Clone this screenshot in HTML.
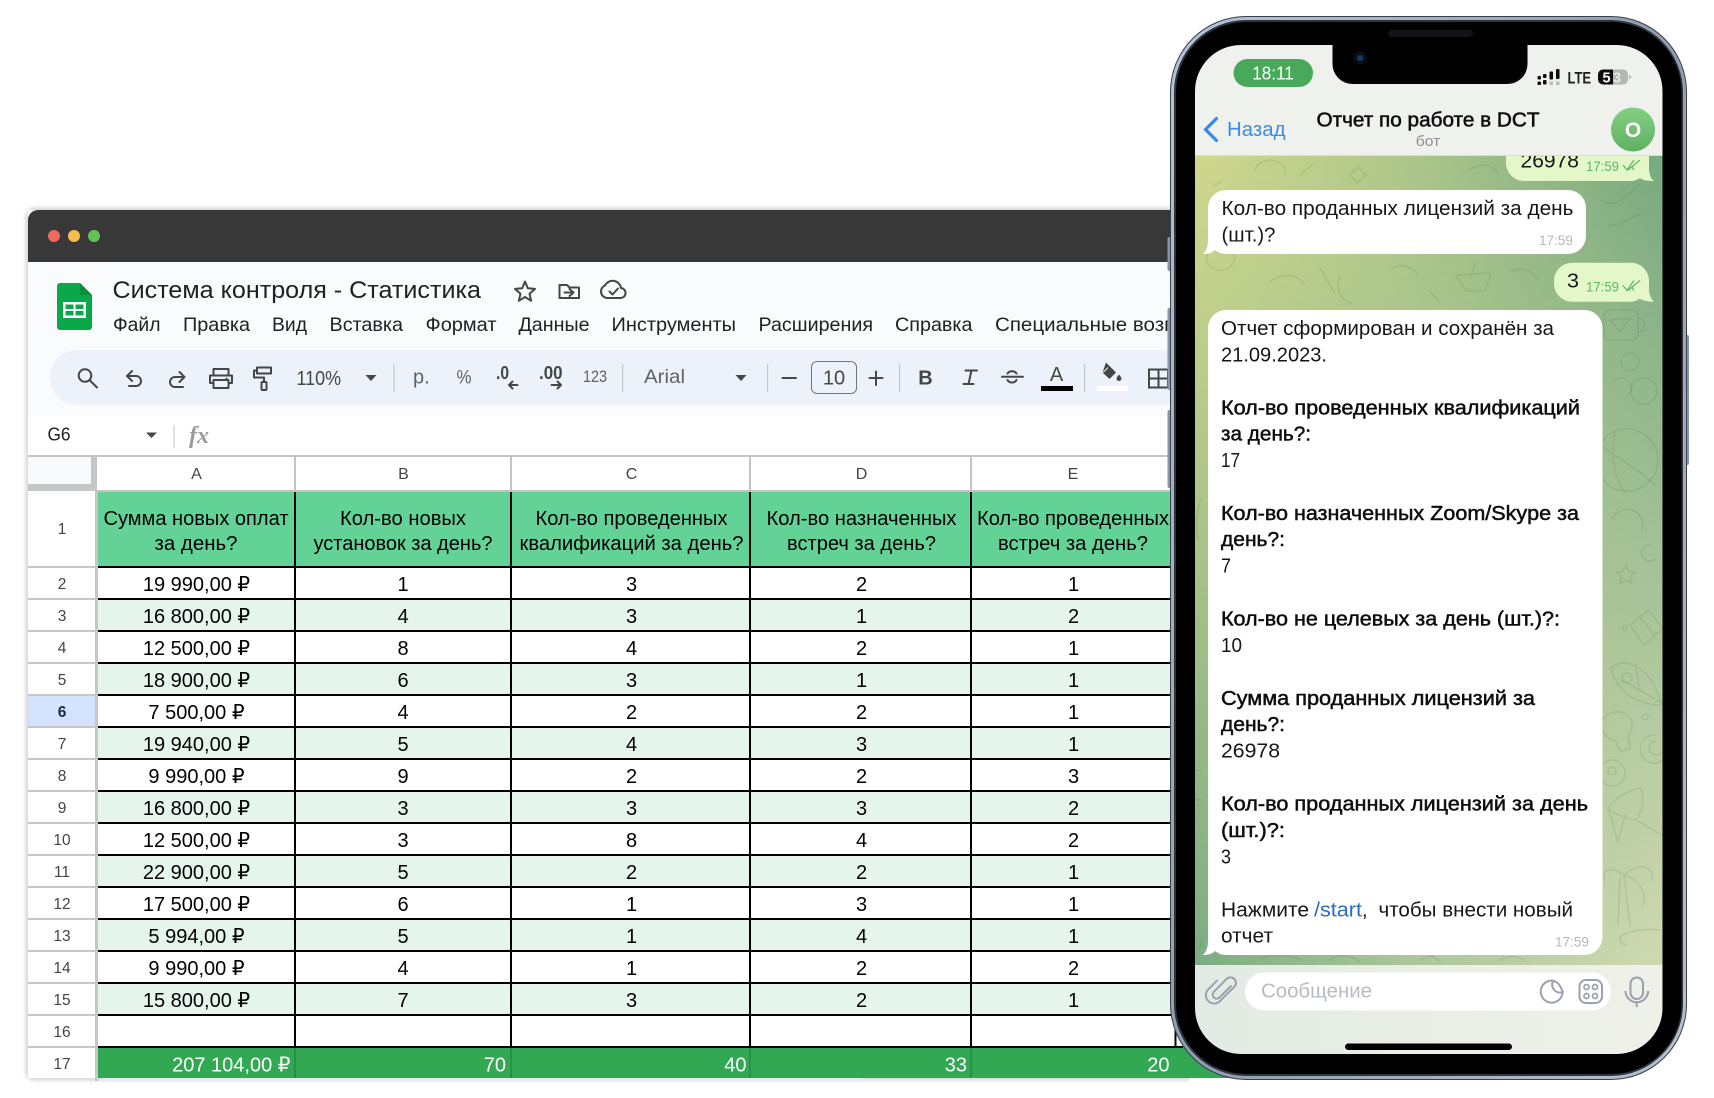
<!DOCTYPE html>
<html lang="ru"><head><meta charset="utf-8"><title>Система контроля</title>
<style>
html,body{margin:0;padding:0;background:#fff;width:1714px;height:1098px;overflow:hidden}
svg{display:block;position:absolute;left:0;top:0}
text{font-family:"Liberation Sans","DejaVu Sans",sans-serif;white-space:pre}
.m{font-size:19.5px;fill:#202124}
.h{font-size:20px;fill:#000;text-anchor:middle}
.d{font-size:20px;fill:#000;text-anchor:middle}
.r{font-size:15.5px;fill:#444;text-anchor:middle}
.c{font-size:16px;fill:#444;text-anchor:middle}
.w{font-size:20px;fill:#fff;text-anchor:end}
.p{font-size:20px;fill:#161616}
.b{font-size:20px;fill:#111;stroke:#111;stroke-width:.5px}
.ico{fill:none;stroke:#444746;stroke-width:2;stroke-linecap:round;stroke-linejoin:round}
.pi{fill:none;stroke:#9aa0ad;stroke-width:2}
.dd{fill:none;stroke:#3f6f45;stroke-opacity:.13;stroke-width:1.6;stroke-linejoin:round;stroke-linecap:round}
</style></head><body>
<svg width="1714" height="1098" viewBox="0 0 1714 1098" xmlns="http://www.w3.org/2000/svg">
<defs>
<filter id="s1" x="-5%" y="-5%" width="110%" height="110%"><feGaussianBlur stdDeviation="1.6"/></filter>
<filter id="soft" x="-2%" y="-2%" width="104%" height="104%"><feGaussianBlur stdDeviation="0.35"/></filter>
<clipPath id="screen"><rect x="1195" y="45" width="467.5" height="1009" rx="46"/></clipPath>
<clipPath id="sheetclip"><rect x="0" y="200" width="1190" height="890"/></clipPath>
<linearGradient id="gtop" x1="0" x2="1" y1="0" y2="0"><stop offset="0" stop-color="#d1d88e"/><stop offset=".45" stop-color="#aec78a"/><stop offset="1" stop-color="#79a97f"/></linearGradient>
<linearGradient id="gbot" x1="0" x2="1" y1="0" y2="0"><stop offset="0" stop-color="#7cac82"/><stop offset=".45" stop-color="#a9c698"/><stop offset="1" stop-color="#d0d9b0"/></linearGradient>
<linearGradient id="mv" x1="0" x2="0" y1="0" y2="1"><stop offset="0" stop-color="#000"/><stop offset="1" stop-color="#fff"/></linearGradient>
<mask id="mk" maskUnits="userSpaceOnUse" x="1195" y="155" width="468" height="811"><rect x="1195" y="155" width="468" height="811" fill="url(#mv)"/></mask>
<linearGradient id="gbar" x1="0" x2="1" y1="0" y2="0"><stop offset="0" stop-color="#e2ebe3"/><stop offset="1" stop-color="#eff1e9"/></linearGradient>
<linearGradient id="gava" x1="0" x2="0" y1="0" y2="1"><stop offset="0" stop-color="#85cf85"/><stop offset="1" stop-color="#5fb161"/></linearGradient>
<linearGradient id="ring" x1="0" x2="1" y1="0" y2="1"><stop offset="0" stop-color="#b4c4da"/><stop offset=".5" stop-color="#8f9db2"/><stop offset="1" stop-color="#b6c0ce"/></linearGradient>
</defs>

<!-- ===== SHEETS WINDOW ===== -->
<g clip-path="url(#sheetclip)">
<rect x="25" y="207" width="1170" height="874" rx="10" fill="#dcdcdc" filter="url(#s1)"/>
<rect x="28" y="210" width="1170" height="868" fill="#fff"/>
<path d="M28 262V220a10 10 0 0 1 10-10H1198V262Z" fill="#383838"/>
<circle cx="54" cy="236" r="6" fill="#ee6a5f"/><circle cx="74" cy="236" r="6" fill="#f5bd4f"/><circle cx="94" cy="236" r="6" fill="#61c354"/>
<rect x="28" y="262" width="1170" height="154" fill="#f9fbfd"/>
<!-- sheets logo -->
<path d="M60 283H80L92 295V327a3 3 0 0 1-3 3H60a3 3 0 0 1-3-3V286a3 3 0 0 1 3-3Z" fill="#0ba84a"/>
<path d="M80 283L92 295H80Z" fill="#0a8c3e"/>
<path d="M63 302H86V318H63Z" fill="#fff"/>
<path d="M65.5 304.5H73.5V309H65.5ZM75.500 304.5H83.500V309H75.500ZM65.5 311H73.5V315.500H65.5ZM75.500 311H83.500V315.500H75.500Z" fill="#0ba84a"/>
<text x="112.500" y="298" font-size="24.500" fill="#202124" textLength="368.500" lengthAdjust="spacingAndGlyphs">Система контроля - Статистика</text>
<!-- star folder cloud -->
<path d="M525 281.500L527.800 288.300L535 288.900L529.500 293.700L531.200 300.800L525 297L518.800 300.800L520.500 293.700L515 288.900L522.200 288.300Z" class="ico"/>
<path d="M559.500 285H567L569.500 287.500H579V298H559.500Z" class="ico" stroke-width="2.200"/>
<path d="M564.500 292.500H573M569.500 289L573.500 292.500L569.500 296" class="ico" stroke-width="1.800"/>
<path d="M607.500 298H620a5 5 0 0 0 1-10a8.500 8.500 0 0 0-16-2.500a6.500 6.500 0 0 0 2.500 12.500Z" class="ico"/>
<path d="M609.500 291.500L612.500 294.500L618 288.500" class="ico"/>
<!-- menu -->
<g>
<text class="m" x="113" y="331" textLength="47.500" lengthAdjust="spacingAndGlyphs">Файл</text>
<text class="m" x="183" y="331" textLength="67" lengthAdjust="spacingAndGlyphs">Правка</text>
<text class="m" x="272" y="331" textLength="35" lengthAdjust="spacingAndGlyphs">Вид</text>
<text class="m" x="329.500" y="331" textLength="73.500" lengthAdjust="spacingAndGlyphs">Вставка</text>
<text class="m" x="425.500" y="331" textLength="71" lengthAdjust="spacingAndGlyphs">Формат</text>
<text class="m" x="518.500" y="331" textLength="71" lengthAdjust="spacingAndGlyphs">Данные</text>
<text class="m" x="611.500" y="331" textLength="124.500" lengthAdjust="spacingAndGlyphs">Инструменты</text>
<text class="m" x="758.500" y="331" textLength="114.500" lengthAdjust="spacingAndGlyphs">Расширения</text>
<text class="m" x="895" y="331" textLength="77.500" lengthAdjust="spacingAndGlyphs">Справка</text>
<text class="m" x="995" y="331" textLength="262" lengthAdjust="spacingAndGlyphs">Специальные возможности</text>
</g>
<!-- toolbar -->
<path d="M77 350H1198V405H77a27.500 27.500 0 0 1 0-55Z" fill="#edf2fa"/>
<circle cx="85" cy="375.500" r="6.300" class="ico"/><path d="M89.500 380L97 387.500" class="ico"/>
<path d="M132 371L127 376L132 381M127 376H136a5 5 0 0 1 0 10H129" class="ico"/>
<path d="M179.500 372L184.500 377L179.500 382M184.500 377H175a5 5 0 0 0 0 10H183" class="ico"/>
<path d="M213.500 375V369H228.500V375M213.500 383H210V375.500H232V383H228.500M213.500 380H228.500V388H213.500Z" class="ico"/>
<circle cx="226.500" cy="378.500" r="1" fill="#444746"/>
<path d="M257 367.500H271V373.500H257ZM257 370.500H254V377.500H264V382" class="ico"/><rect x="261.500" y="382" width="5" height="8" rx="1" class="ico"/>
<text x="296.500" y="385" font-size="20" fill="#444746" textLength="44.500" lengthAdjust="spacingAndGlyphs">110%</text>
<path d="M365.500 375H376.500L371 381Z" fill="#444746"/>
<rect x="393.500" y="364" width="1.200" height="28" fill="#c4c7c5"/>
<text x="413" y="383.500" font-size="20" fill="#5f6368">р.</text>
<text x="456.500" y="383.500" font-size="19" fill="#5f6368" textLength="15" lengthAdjust="spacingAndGlyphs">%</text>
<text x="496" y="379" font-size="18" font-weight="bold" fill="#444746" textLength="13" lengthAdjust="spacingAndGlyphs">.0</text>
<path d="M517.500 385H509M512.500 381.500L509 385L512.500 388.500" class="ico" stroke-width="1.800" stroke-linecap="butt"/>
<text x="539" y="379" font-size="18" font-weight="bold" fill="#444746" textLength="23.500" lengthAdjust="spacingAndGlyphs">.00</text>
<path d="M551.500 385H561M557.500 381.500L561 385L557.500 388.500" class="ico" stroke-width="1.800" stroke-linecap="butt"/>
<text x="583" y="382" font-size="16.500" fill="#5f6368" textLength="24" lengthAdjust="spacingAndGlyphs">123</text>
<rect x="622" y="364" width="1.200" height="28" fill="#c4c7c5"/>
<text x="644" y="383" font-size="19.500" fill="#5f6368" textLength="41" lengthAdjust="spacingAndGlyphs">Arial</text>
<path d="M735.500 375H746.500L741 381Z" fill="#444746"/>
<rect x="767" y="364" width="1.200" height="28" fill="#c4c7c5"/>
<path d="M782.500 378H796" class="ico" stroke-width="2.400" stroke-linecap="butt"/>
<rect x="811.500" y="361.500" width="45" height="32" rx="5.500" fill="none" stroke="#747775" stroke-width="1"/>
<text x="834" y="384.500" font-size="20" fill="#444746" text-anchor="middle">10</text>
<path d="M876 371.500V385M869.500 378H882.500" class="ico" stroke-linecap="butt"/>
<rect x="899" y="364" width="1.200" height="28" fill="#c4c7c5"/>
<text x="925.500" y="384.500" font-size="20" font-weight="bold" fill="#444746" text-anchor="middle">B</text>
<path d="M965.500 370.500H977M971.500 370.500L968.500 384M963.500 384H973.500" class="ico" stroke-width="2.600" stroke-linecap="butt"/>
<path d="M1002 376.700H1023" class="ico" stroke-linecap="butt"/>
<path d="M1007.500 373.500a5 4 0 0 1 9 0M1007.500 380a5 4.500 0 0 0 9 0" class="ico" stroke-width="2"/>
<text x="1056.500" y="381" font-size="20" fill="#444746" text-anchor="middle">A</text>
<rect x="1041" y="386" width="32" height="5" fill="#000"/>
<rect x="1084" y="364" width="1.200" height="28" fill="#c4c7c5"/>
<path d="M1106 362.500L1116 372.500L1109.500 379L1102.500 372.500Z" fill="#444746"/><path d="M1103 372.500L1108 367.500" stroke="#edf2fa" stroke-width="1"/>
<path d="M1119 374.500C1117.500 376.500 1116.500 377.500 1116.500 378.500a2.500 2.500 0 0 0 5 0C1121.500 377.500 1120.500 376.500 1119 374.500Z" fill="#444746"/>
<rect x="1097" y="386" width="31" height="5" fill="#fff"/>
<path d="M1149 369.500H1168V387.500H1149ZM1158.500 369.500V387.500M1149 378.500H1168" fill="none" stroke="#444746" stroke-width="2"/>
<!-- formula bar -->
<rect x="28" y="405" width="1170" height="11" fill="#f9fbfd"/>
<text x="47.500" y="440.500" font-size="18" fill="#202124" textLength="23" lengthAdjust="spacingAndGlyphs">G6</text>
<path d="M146 432.500H157L151.500 438Z" fill="#444746"/>
<rect x="173.500" y="425" width="1" height="23" fill="#c7c7c7"/>
<text x="189" y="443" font-size="24" font-style="italic" font-weight="bold" fill="#9b9b9b" style="font-family:'Liberation Serif',serif">fx</text>
<!-- column headers -->
<rect x="28" y="455" width="1170" height="2" fill="#c4c4c4"/>
<rect x="28" y="457" width="63" height="27" fill="#f8f9fa"/>
<rect x="91" y="457" width="6" height="34" fill="#c4c7c5"/><rect x="28" y="484" width="69" height="7" fill="#c4c7c5"/>
<rect x="97" y="490" width="1100" height="2" fill="#c4c4c4"/>
<g fill="#c4c4c4"><rect x="294" y="457" width="2" height="34"/><rect x="510" y="457" width="2" height="34"/><rect x="749" y="457" width="2" height="34"/><rect x="970" y="457" width="2" height="34"/></g>
<text class="c" x="196.500" y="479">A</text><text class="c" x="403.500" y="479">B</text><text class="c" x="631.500" y="479">C</text><text class="c" x="861.500" y="479">D</text><text class="c" x="1073" y="479">E</text>
<!-- row fills -->
<rect x="98" y="492" width="1100" height="75" fill="#63d297"/>
<g fill="#e6f5ec">
<rect x="98" y="599" width="1100" height="32"/><rect x="98" y="663" width="1100" height="32"/><rect x="98" y="727" width="1100" height="32"/><rect x="98" y="791" width="1100" height="32"/><rect x="98" y="855" width="1100" height="32"/><rect x="98" y="919" width="1100" height="32"/><rect x="98" y="983" width="1100" height="32"/>
</g>
<rect x="98" y="1047" width="1100" height="31" fill="#33a853"/>
<rect x="28" y="695" width="67" height="32" fill="#d3e3fd"/>
<!-- row header separators -->
<g fill="#c4c7c5">
<rect x="28" y="566" width="69" height="2"/><rect x="28" y="598" width="69" height="2"/><rect x="28" y="630" width="69" height="2"/><rect x="28" y="662" width="69" height="2"/><rect x="28" y="694" width="69" height="2"/><rect x="28" y="726" width="69" height="2"/><rect x="28" y="758" width="69" height="2"/><rect x="28" y="790" width="69" height="2"/><rect x="28" y="822" width="69" height="2"/><rect x="28" y="854" width="69" height="2"/><rect x="28" y="886" width="69" height="2"/><rect x="28" y="918" width="69" height="2"/><rect x="28" y="950" width="69" height="2"/><rect x="28" y="982" width="69" height="2"/><rect x="28" y="1014" width="69" height="2"/><rect x="28" y="1046" width="69" height="2"/>
<rect x="95" y="491" width="3" height="590"/>
</g>
<!-- black lines -->
<g fill="#000">
<rect x="98" y="566" width="1085" height="2"/><rect x="98" y="598" width="1085" height="2"/><rect x="98" y="630" width="1085" height="2"/><rect x="98" y="662" width="1085" height="2"/><rect x="98" y="694" width="1085" height="2"/><rect x="98" y="726" width="1085" height="2"/><rect x="98" y="758" width="1085" height="2"/><rect x="98" y="790" width="1085" height="2"/><rect x="98" y="822" width="1085" height="2"/><rect x="98" y="854" width="1085" height="2"/><rect x="98" y="886" width="1085" height="2"/><rect x="98" y="918" width="1085" height="2"/><rect x="98" y="950" width="1085" height="2"/><rect x="98" y="982" width="1085" height="2"/><rect x="98" y="1014" width="1085" height="2"/><rect x="98" y="1046" width="1085" height="2"/>
<rect x="294" y="492" width="2" height="555"/><rect x="510" y="492" width="2" height="555"/><rect x="749" y="492" width="2" height="555"/><rect x="970" y="492" width="2" height="555"/><rect x="1174.500" y="492" width="2" height="555"/>
</g>
<g fill="#2b9148"><rect x="294" y="1048" width="2" height="30"/><rect x="510" y="1048" width="2" height="30"/><rect x="749" y="1048" width="2" height="30"/><rect x="970" y="1048" width="2" height="30"/></g>
<rect x="103" y="1078" width="760" height="3" fill="#e8eaed"/>
<!-- header texts -->
<text class="h" x="196" y="525" textLength="185" lengthAdjust="spacingAndGlyphs">Сумма новых оплат</text>
<text class="h" x="196" y="550" textLength="83" lengthAdjust="spacingAndGlyphs">за день?</text>
<text class="h" x="403" y="525" textLength="126" lengthAdjust="spacingAndGlyphs">Кол-во новых</text>
<text class="h" x="403" y="550" textLength="179" lengthAdjust="spacingAndGlyphs">установок за день?</text>
<text class="h" x="631.500" y="525" textLength="192" lengthAdjust="spacingAndGlyphs">Кол-во проведенных</text>
<text class="h" x="631.500" y="550" textLength="224" lengthAdjust="spacingAndGlyphs">квалификаций за день?</text>
<text class="h" x="861.500" y="525" textLength="190" lengthAdjust="spacingAndGlyphs">Кол-во назначенных</text>
<text class="h" x="861.500" y="550" textLength="149" lengthAdjust="spacingAndGlyphs">встреч за день?</text>
<text class="h" x="1073" y="525" textLength="192" lengthAdjust="spacingAndGlyphs">Кол-во проведенных</text>
<text class="h" x="1073" y="550" textLength="150" lengthAdjust="spacingAndGlyphs">встреч за день?</text>
<!-- row numbers -->
<text class="r" x="62" y="534">1</text>
<text class="r" x="62" y="589">2</text><text class="r" x="62" y="621">3</text><text class="r" x="62" y="653">4</text><text class="r" x="62" y="685">5</text><text class="r" x="62" y="717" font-weight="bold" style="fill:#1a2b4c">6</text><text class="r" x="62" y="749">7</text><text class="r" x="62" y="781">8</text><text class="r" x="62" y="813">9</text><text class="r" x="62" y="845">10</text><text class="r" x="62" y="877">11</text><text class="r" x="62" y="909">12</text><text class="r" x="62" y="941">13</text><text class="r" x="62" y="973">14</text><text class="r" x="62" y="1005">15</text><text class="r" x="62" y="1037">16</text><text class="r" x="62" y="1069">17</text>
<!-- data -->
<g>
<text class="d" x="196.500" y="591">19 990,00 ₽</text><text class="d" x="403" y="591">1</text><text class="d" x="631.500" y="591">3</text><text class="d" x="861.500" y="591">2</text><text class="d" x="1073.500" y="591">1</text>
<text class="d" x="196.500" y="623">16 800,00 ₽</text><text class="d" x="403" y="623">4</text><text class="d" x="631.500" y="623">3</text><text class="d" x="861.500" y="623">1</text><text class="d" x="1073.500" y="623">2</text>
<text class="d" x="196.500" y="655">12 500,00 ₽</text><text class="d" x="403" y="655">8</text><text class="d" x="631.500" y="655">4</text><text class="d" x="861.500" y="655">2</text><text class="d" x="1073.500" y="655">1</text>
<text class="d" x="196.500" y="687">18 900,00 ₽</text><text class="d" x="403" y="687">6</text><text class="d" x="631.500" y="687">3</text><text class="d" x="861.500" y="687">1</text><text class="d" x="1073.500" y="687">1</text>
<text class="d" x="196.500" y="719">7 500,00 ₽</text><text class="d" x="403" y="719">4</text><text class="d" x="631.500" y="719">2</text><text class="d" x="861.500" y="719">2</text><text class="d" x="1073.500" y="719">1</text>
<text class="d" x="196.500" y="751">19 940,00 ₽</text><text class="d" x="403" y="751">5</text><text class="d" x="631.500" y="751">4</text><text class="d" x="861.500" y="751">3</text><text class="d" x="1073.500" y="751">1</text>
<text class="d" x="196.500" y="783">9 990,00 ₽</text><text class="d" x="403" y="783">9</text><text class="d" x="631.500" y="783">2</text><text class="d" x="861.500" y="783">2</text><text class="d" x="1073.500" y="783">3</text>
<text class="d" x="196.500" y="815">16 800,00 ₽</text><text class="d" x="403" y="815">3</text><text class="d" x="631.500" y="815">3</text><text class="d" x="861.500" y="815">3</text><text class="d" x="1073.500" y="815">2</text>
<text class="d" x="196.500" y="847">12 500,00 ₽</text><text class="d" x="403" y="847">3</text><text class="d" x="631.500" y="847">8</text><text class="d" x="861.500" y="847">4</text><text class="d" x="1073.500" y="847">2</text>
<text class="d" x="196.500" y="879">22 900,00 ₽</text><text class="d" x="403" y="879">5</text><text class="d" x="631.500" y="879">2</text><text class="d" x="861.500" y="879">2</text><text class="d" x="1073.500" y="879">1</text>
<text class="d" x="196.500" y="911">17 500,00 ₽</text><text class="d" x="403" y="911">6</text><text class="d" x="631.500" y="911">1</text><text class="d" x="861.500" y="911">3</text><text class="d" x="1073.500" y="911">1</text>
<text class="d" x="196.500" y="943">5 994,00 ₽</text><text class="d" x="403" y="943">5</text><text class="d" x="631.500" y="943">1</text><text class="d" x="861.500" y="943">4</text><text class="d" x="1073.500" y="943">1</text>
<text class="d" x="196.500" y="975">9 990,00 ₽</text><text class="d" x="403" y="975">4</text><text class="d" x="631.500" y="975">1</text><text class="d" x="861.500" y="975">2</text><text class="d" x="1073.500" y="975">2</text>
<text class="d" x="196.500" y="1007">15 800,00 ₽</text><text class="d" x="403" y="1007">7</text><text class="d" x="631.500" y="1007">3</text><text class="d" x="861.500" y="1007">2</text><text class="d" x="1073.500" y="1007">1</text>
<text class="w" x="290.500" y="1071.500">207 104,00 ₽</text><text class="w" x="506" y="1071.500">70</text><text class="w" x="746.500" y="1071.500">40</text><text class="w" x="967" y="1071.500">33</text><text class="w" x="1169.500" y="1071.500">20</text>
</g>
</g>
<rect x="1185" y="1047" width="95" height="31" fill="#33a853"/>

<!-- ===== PHONE ===== -->
<!-- side buttons -->
<g fill="#8795aa"><rect x="1167.500" y="237" width="5" height="34" rx="2"/><rect x="1167.500" y="308" width="5" height="82" rx="2"/><rect x="1167.500" y="410" width="5" height="78" rx="2"/><rect x="1684" y="335" width="5" height="130" rx="2"/></g>
<rect x="1170" y="16" width="517" height="1064" rx="76" fill="#3a3e46"/>
<rect x="1171" y="17" width="515" height="1062" rx="75" fill="url(#ring)"/>
<rect x="1174" y="20" width="509" height="1056" rx="72" fill="#30343b"/>
<rect x="1176" y="22" width="505.500" height="1052" rx="70" fill="#000"/>
<rect x="1388" y="30" width="85" height="7" rx="3.500" fill="#121316"/>

<g clip-path="url(#screen)">
<g filter="url(#soft)">
<!-- chat bg -->
<rect x="1195" y="155" width="468" height="811" fill="url(#gtop)"/>
<rect x="1195" y="155" width="468" height="811" fill="url(#gbot)" mask="url(#mk)"/>
<!-- doodles -->
<g class="dd">
<path d="M1625.700 565L1628.500 571.500L1635.500 572L1630 576.500L1632 583.500L1625.700 580L1619.500 583.500L1621.500 576.500L1616 572L1623 571.500Z"/>
<path d="M1630 625L1648 610L1663 628L1644 645Z M1640 617L1655 636"/>
<path d="M1611 668C1625 656 1650 665 1662 705C1640 705 1618 695 1611 668ZM1622 680L1660 702M1635 664L1640 692"/>
<circle cx="1627" cy="678" r="5"/>
<path d="M1617 712a14 14 0 0 1 11 24l2 12-9 4-6-12a14 14 0 0 1 2-28Z"/>
<path d="M1655 735a14 14 0 1 0 8 25M1655 741a7 7 0 1 0 6 12"/>
<circle cx="1612" cy="773" r="13"/><circle cx="1612" cy="771" r="4"/>
<path d="M1608 808C1620 792 1638 788 1641 788C1645 800 1642 812 1636 820C1625 818 1615 815 1608 808ZM1625 815L1618 842M1636 820L1662 835M1608 808L1618 842"/>
<path d="M1624 875C1610 865 1600 870 1605 880M1624 875C1640 860 1655 868 1652 880M1624 875C1640 880 1648 895 1643 905M1624 875L1630 925M1620 878L1618 925"/>
<path d="M1625 945a30 10 0 0 1 35-15"/>
<circle cx="1627" cy="460" r="31"/><path d="M1600 445C1620 460 1640 470 1655 485M1615 432C1610 460 1615 480 1625 492"/>
<rect x="1604" y="310" width="34" height="30" rx="6"/><path d="M1638 318a7 7 0 0 1 0 14M1610 320L1630 318L1620 332Z"/>
<circle cx="1630" cy="362" r="9"/><circle cx="1644" cy="391" r="13"/>
<path d="M1612 385a10 10 0 1 1 14 12M1612 520a15 15 0 0 1 30 10M1650 545a8 8 0 1 0 5 14"/>
<circle cx="1625" cy="628" r="2"/><circle cx="1645" cy="717" r="3"/>
<path d="M1255 170a15 12 0 0 1 30 5M1300 175l12 -10 M1350 175l8-8 8 8-8 8ZM1470 170c10-8 24-6 28 4M1222 180l-8 6"/>
<path d="M1600 200c18 10 30-8 40-16M1610 225c10 2 25-12 30-10M1620 170l10 10"/>
<path d="M1220 270a14 12 0 1 1 1 0M1270 282c12-10 28-8 34 2M1320 268l14 24M1390 270c8-6 22-6 28 6M1455 275l12 16h18l6-18ZM1470 278l5-14 M1510 272c10-6 22-2 28 8"/>
<path d="M1340 275c-6 16 4 28 12 28M1430 292l8 8"/>
<path d="M1203 940l-4 10M1201 500a10 30 0 0 0 -3 40M1201 770a14 14 0 0 0 0 30"/>
<path d="M1260 960a20 4 0 0 1 40 0M1330 960c8-6 20-6 30 2M1420 960c6-5 14-5 20 1M1500 960c6-4 18-4 24 0"/>
</g>
<!-- bubbles -->
<path d="M1520 130H1631a18 18 0 0 1 18 18V170C1650 176 1651 179 1654 181C1647 181 1642 180 1640 178C1637 180 1634 181 1631 181H1524a18 18 0 0 1-18-18V148a18 18 0 0 1 14-18Z" fill="#e3f7c9"/>
<text class="p" x="1520.500" y="167.700" textLength="58.500" lengthAdjust="spacingAndGlyphs">26978</text>
<text x="1586" y="171" font-size="14" fill="#5eb762" textLength="33" lengthAdjust="spacingAndGlyphs">17:59</text>
<path d="M1623 165L1627 170L1634 160M1628 170L1640 160M1632 167L1634 170" fill="none" stroke="#5eb762" stroke-width="1.200"/>

<path d="M1226 190H1568a18 18 0 0 1 18 18V236a18 18 0 0 1-18 18H1226C1221 254 1218 252 1215 250C1212 253 1208 254 1203 254C1206 251 1208 247 1208 240V208a18 18 0 0 1 18-18Z" fill="#fff"/>
<text class="p" x="1221.500" y="215" textLength="352" lengthAdjust="spacingAndGlyphs">Кол-во проданных лицензий за день</text>
<text class="p" x="1221.500" y="241.500" textLength="54" lengthAdjust="spacingAndGlyphs">(шт.)?</text>
<text x="1539" y="245" font-size="14" fill="#b7b7b7" textLength="34" lengthAdjust="spacingAndGlyphs">17:59</text>

<path d="M1572 262.700H1631a18 18 0 0 1 18 18V291C1650 296 1651 299 1654 301.700C1647 301.700 1642 300.500 1640 298.500C1637 300.500 1634 301.700 1631 301.700H1572a18 18 0 0 1-18-18V280.700a18 18 0 0 1 18-18Z" fill="#e3f7c9"/>
<text class="p" x="1567" y="287.700" textLength="12" lengthAdjust="spacingAndGlyphs">3</text>
<text x="1586" y="291.700" font-size="14" fill="#5eb762" textLength="33" lengthAdjust="spacingAndGlyphs">17:59</text>
<path d="M1623 285.500L1627 290.500L1634 280.500M1628 290.500L1640 280.500M1632 287.500L1634 290.500" fill="none" stroke="#5eb762" stroke-width="1.200"/>

<path d="M1226 310H1584.500a18 18 0 0 1 18 18V937a18 18 0 0 1-18 18H1226C1221 955 1218 953 1215 951C1212 954 1208 955 1203 955C1206 952 1208 948 1208 941V328a18 18 0 0 1 18-18Z" fill="#fff"/>
<text class="p" x="1221" y="335" textLength="333" lengthAdjust="spacingAndGlyphs">Отчет сформирован и сохранён за</text>
<text class="p" x="1221" y="361.500" textLength="106" lengthAdjust="spacingAndGlyphs">21.09.2023.</text>
<text class="b" x="1221" y="414.300" textLength="359" lengthAdjust="spacingAndGlyphs">Кол-во проведенных квалификаций</text>
<text class="b" x="1221" y="440.700" textLength="90" lengthAdjust="spacingAndGlyphs">за день?:</text>
<text class="p" x="1221" y="467" textLength="19" lengthAdjust="spacingAndGlyphs">17</text>
<text class="b" x="1221" y="520" textLength="358" lengthAdjust="spacingAndGlyphs">Кол-во назначенных Zoom/Skype за</text>
<text class="b" x="1221" y="546" textLength="64" lengthAdjust="spacingAndGlyphs">день?:</text>
<text class="p" x="1221" y="572.500" textLength="10" lengthAdjust="spacingAndGlyphs">7</text>
<text class="b" x="1221" y="625.500" textLength="339" lengthAdjust="spacingAndGlyphs">Кол-во не целевых за день (шт.)?:</text>
<text class="p" x="1221" y="652" textLength="21" lengthAdjust="spacingAndGlyphs">10</text>
<text class="b" x="1221" y="704.800" textLength="314" lengthAdjust="spacingAndGlyphs">Сумма проданных лицензий за</text>
<text class="b" x="1221" y="731.200" textLength="64" lengthAdjust="spacingAndGlyphs">день?:</text>
<text class="p" x="1221" y="757.600" textLength="59" lengthAdjust="spacingAndGlyphs">26978</text>
<text class="b" x="1221" y="810.500" textLength="367" lengthAdjust="spacingAndGlyphs">Кол-во проданных лицензий за день</text>
<text class="b" x="1221" y="837" textLength="64" lengthAdjust="spacingAndGlyphs">(шт.)?:</text>
<text class="p" x="1221" y="863.300" textLength="10" lengthAdjust="spacingAndGlyphs">3</text>
<text class="p" x="1221" y="916.300" textLength="88" lengthAdjust="spacingAndGlyphs">Нажмите</text>
<text class="p" x="1314" y="916.300" textLength="48" lengthAdjust="spacingAndGlyphs" style="fill:#2a6bc4">/start</text>
<text class="p" x="1362" y="916.300">,</text>
<text class="p" x="1378.500" y="916.300" textLength="194.500" lengthAdjust="spacingAndGlyphs">чтобы внести новый</text>
<text class="p" x="1221" y="942.700" textLength="52" lengthAdjust="spacingAndGlyphs">отчет</text>
<text x="1555" y="946.500" font-size="14" fill="#b7b7b7" textLength="34" lengthAdjust="spacingAndGlyphs">17:59</text>

<!-- top bar -->
<rect x="1195" y="45" width="468" height="110.700" fill="#eff1ec"/>
<rect x="1195" y="155" width="468" height="1" fill="#d8ddcf"/>
<rect x="1233.500" y="59" width="79.500" height="28" rx="14" fill="#4aa95a"/>
<text x="1273" y="79.500" font-size="18.500" fill="#fff" text-anchor="middle" textLength="41.500" lengthAdjust="spacingAndGlyphs">18:11</text>
<!-- signal -->
<g fill="#111">
<rect x="1537.500" y="76" width="3.500" height="3.500" rx="1"/><rect x="1537.500" y="81.500" width="3.500" height="3.500" rx="1"/>
<rect x="1543" y="74" width="3.500" height="4" rx="1"/><rect x="1543" y="80" width="3.500" height="4.500" rx="1"/>
<rect x="1549.500" y="71.500" width="3.500" height="8" rx="1"/>
<rect x="1556" y="69" width="3.500" height="10" rx="1"/>
</g>
<rect x="1549.500" y="81.500" width="3.500" height="3.500" fill="#bdbdb8"/><rect x="1556" y="81.500" width="3.500" height="3.500" fill="#bdbdb8"/>
<text x="1567.500" y="83.500" font-size="17" font-weight="bold" fill="#222" textLength="23.500" lengthAdjust="spacingAndGlyphs">LTE</text>
<rect x="1598" y="69.500" width="30" height="15" rx="5" fill="#b4b6b2"/>
<path d="M1603 69.500H1613V84.500H1603a5 5 0 0 1-5-5V74.500a5 5 0 0 1 5-5Z" fill="#0e0e0e"/>
<path d="M1629 74.500L1631.500 77L1629 79.500Z" fill="#b4b6b2"/>
<text x="1602.500" y="82.500" font-size="14.500" font-weight="bold" fill="#fff">5</text>
<text x="1613" y="82.500" font-size="14.500" font-weight="bold" fill="#e9e9e6">3</text>
<!-- nav -->
<path d="M1216.500 118.500L1205.500 129.500L1216.500 140.500" fill="none" stroke="#3a86e8" stroke-width="3.200" stroke-linecap="round" stroke-linejoin="round"/>
<text x="1227" y="136" font-size="20.500" fill="#3d8ae8" textLength="58.500" lengthAdjust="spacingAndGlyphs">Назад</text>
<text x="1316.500" y="126.500" font-size="20" fill="#111" stroke="#111" stroke-width=".55" textLength="223" lengthAdjust="spacingAndGlyphs">Отчет по работе в DCT</text>
<text x="1428" y="146" font-size="15" fill="#8e8e93" text-anchor="middle" textLength="24.500" lengthAdjust="spacingAndGlyphs">бот</text>
<circle cx="1633" cy="129.500" r="22" fill="url(#gava)"/>
<text x="1633" y="137" font-size="21" font-weight="bold" fill="#fff" text-anchor="middle">О</text>
<!-- bottom bar -->
<rect x="1195" y="965" width="468" height="90" fill="url(#gbar)"/>
<rect x="1245" y="972.500" width="366" height="38" rx="19" fill="#fff"/>
<text x="1261" y="997.300" font-size="20.500" fill="#b8bbbf" textLength="111" lengthAdjust="spacingAndGlyphs">Сообщение</text>
<g class="pi">
<path d="M1231 986L1219.500 997.500a4 4 0 0 1-5.700-5.700L1226.500 979a5.500 5.500 0 0 1 7.800 7.800L1219.500 1001.500a8.300 8.300 0 0 1-11.700-11.700L1217 980.500" stroke-linecap="round"/>
<path d="M1553 980.700a11 11 0 1 0 9.700 11.500C1556 994 1550 988 1553 980.700Z"/>
<path d="M1553 980.700C1558 982 1561 986.500 1562.700 992.200"/>
<rect x="1579.500" y="980" width="22.500" height="23" rx="6.500"/>
<circle cx="1586.500" cy="987" r="2.500" stroke-width="1.700"/><circle cx="1595" cy="987" r="2.500" stroke-width="1.700"/><circle cx="1586.500" cy="996" r="2.500" stroke-width="1.700"/><circle cx="1595" cy="996" r="2.500" stroke-width="1.700"/>
<rect x="1630.500" y="977.500" width="12.500" height="21.500" rx="6.200"/>
<path d="M1625.500 991a11.300 11.300 0 0 0 22.600 0M1636.700 1002.500V1007"/>
</g>
<rect x="1345" y="1043.500" width="167" height="6.500" rx="3.250" fill="#000"/>
</g>
</g>
<!-- notch on top -->
<path d="M1332.500 44V64a20 20 0 0 0 20 20H1507.500a20 20 0 0 0 20-20V44Z" fill="#000"/>
<circle cx="1360" cy="58" r="6.500" fill="#0a0f1a"/><circle cx="1360" cy="58" r="3" fill="#123a6a"/>
</svg>
</body></html>
